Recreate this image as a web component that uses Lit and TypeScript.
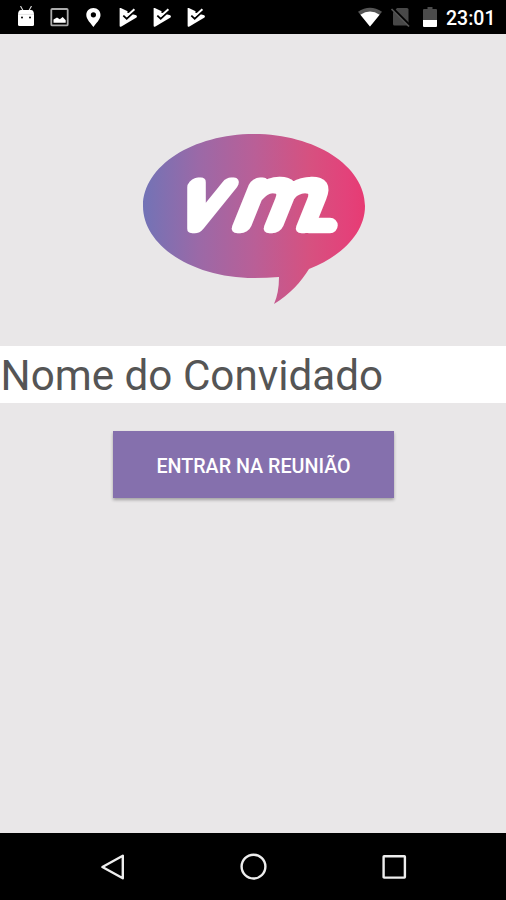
import { LitElement, html, css } from "lit";
import { customElement } from "lit/decorators.js";

const playCheck = () => html`
  <svg class="icon" width="20" height="22" viewBox="0 0 20 22">
    <path d="M1.6 2.6Q1.6 1.6 2.8 2L18.5 9.6Q19.4 10.5 18.5 11.4L3.4 20.6Q1.6 21.4 1.6 19.6Z" fill="#fff" />
    <path d="M9 6.6 12 1.5 20 1.5 20 8.5 15.5 8.6Z" fill="#000" />
    <path d="M5.4 9.6 8.7 12.6 16.6 5.2" fill="none" stroke="#000" stroke-width="2" />
    <path d="M6 7.6 8.7 10.2 16.4 3.2" fill="none" stroke="#fff" stroke-width="2" />
  </svg>`;

@customElement("status-bar")
class StatusBar extends LitElement {
  static styles = css`
    :host {
      display: flex;
      justify-content: space-between;
      align-items: center;
      height: 34px;
      box-sizing: border-box;
      padding: 0 10px 0 16px;
      background: #000;
      color: #fff;
      font-family: Roboto, sans-serif;
    }
    .group { display: flex; align-items: center; }
    .left { gap: 14px; }
    .right { gap: 8px; }
    .icon { display: block; flex: none; }
    .battery { margin-left: 2px; }
    .time {
      width: 50px;
      font-size: 19.5px;
      font-weight: 500;
      line-height: 34px;
      padding-top: 3px;
      white-space: nowrap;
    }
  `;
  render() {
    return html`
      <div class="group left">
        <svg class="icon" width="20" height="22" viewBox="0 0 20 22">
          <path d="M4.5 0 7 4.5M15.5 0 13 4.5" stroke="#ddd" stroke-width="1.1" />
          <path d="M2 9Q2 4 5 4H15Q18 4 18 9V18.5Q18 20 16.5 20H3.5Q2 20 2 18.5Z" fill="#fff" />
          <path d="M2 8.4H18" stroke="#ccc" stroke-width=".6" />
          <circle cx="6" cy="11.5" r="1" /><circle cx="14" cy="11.5" r="1" />
        </svg>
        <svg class="icon" width="20" height="22" viewBox="0 0 20 22">
          <rect x="1.3" y="3" width="16.4" height="16.4" rx="1" fill="none" stroke="#aaa" stroke-width="1.8" />
          <path d="M3.5 16.8V13.4L7 11.5 9.8 13.2 12.7 11 15.7 14.2V16.8Z" fill="#fff" />
        </svg>
        <svg class="icon" width="20" height="22" viewBox="0 0 20 22">
          <path fill="#fff" fill-rule="evenodd" d="M9.4 2C5.2 2 2.3 5 2.3 9C2.3 13.5 7 17.5 9.4 21C11.8 17.5 16.5 13.5 16.5 9C16.5 5 13.6 2 9.4 2ZM9.4 6.2A2.6 2.6 0 1 1 9.4 11.4A2.6 2.6 0 1 1 9.4 6.2Z" />
        </svg>
        ${playCheck()}${playCheck()}${playCheck()}
      </div>
      <div class="group right">
        <svg class="icon" width="24" height="20" viewBox="0 0 24 20">
          <path d="M0 4.8Q12-3.4 24 4.8L12 19.5Z" fill="#555" />
          <path d="M2.4 7.7Q12 1.4 21.6 7.7L12 19.5Z" fill="#fff" />
        </svg>
        <svg class="icon" width="22" height="22" viewBox="0 0 22 22">
          <path d="M7 2H17Q18.5 2 18.5 3.5V18Q18.5 19.5 17 19.5H4.5Q3 19.5 3 18V6.5Z" fill="#484848" />
          <path d="M2.5 2.2 20 19.7" stroke="#000" stroke-width="2.4" />
          <path d="M1.5 3 19 20.5" stroke="#555" stroke-width="1.7" />
        </svg>
        <svg class="icon battery" width="16" height="22" viewBox="0 0 16 22">
          <path d="M2 3H5.5V1H10.5V3H14Q15 3 15 4V14H1V4Q1 3 2 3Z" fill="#4c4c4c" />
          <path d="M1 14H15V20Q15 21 14 21H2Q1 21 1 20Z" fill="#fff" />
        </svg>
        <span class="time">23:01</span>
      </div>`;
  }
}

@customElement("brand-logo")
class BrandLogo extends LitElement {
  static styles = css`
    :host { display: block; width: 222px; height: 170px; }
    svg { display: block; }
    .mark {
      font-family: Roboto, sans-serif;
      font-weight: 100;
      font-size: 78px;
      fill: #fff;
      stroke: #fff;
      stroke-width: 14.5px;
      stroke-linejoin: round;
      stroke-linecap: round;
    }
  `;
  render() {
    return html`
      <svg width="222" height="170" viewBox="0 0 222 170">
        <defs>
          <linearGradient id="g" gradientUnits="userSpaceOnUse" x1="0" y1="0" x2="222" y2="0">
            <stop offset="0" stop-color="#7273b6" />
            <stop offset=".25" stop-color="#9b69a7" />
            <stop offset=".5" stop-color="#b95f97" />
            <stop offset=".75" stop-color="#d65180" />
            <stop offset=".92" stop-color="#e3427a" />
            <stop offset="1" stop-color="#e73b73" />
          </linearGradient>
        </defs>
        <path fill="url(#g)" d="M111 0C172 0 222 32 222 72C222 99 199 122 166 135C158 148 147 160 131 170Q136 159 136 143Q124 144 111 144C50 144 0 112 0 72C0 32 50 0 111 0Z" />
        <text class="mark" transform="translate(34 92) skewX(-22) scale(1.04 1)">v</text>
        <text class="mark" transform="translate(90.5 92) skewX(-22) scale(1.15 1)">m</text>
        <path d="M166 91.5H187" stroke="#fff" stroke-width="15.5" stroke-linecap="round" />
      </svg>`;
  }
}

@customElement("nav-bar")
class NavBar extends LitElement {
  static styles = css`
    :host {
      display: flex;
      justify-content: center;
      align-items: center;
      gap: 112px;
      height: 67px;
      background: #000;
    }
    svg { display: block; flex: none; fill: none; stroke: #eee; stroke-width: 2.4; stroke-linejoin: round; }
  `;
  render() {
    return html`
      <svg width="28" height="28" viewBox="0 0 28 28"><path d="M3.4 14 23.8 2.7V25.3Z" /></svg>
      <svg width="28" height="28" viewBox="0 0 28 28"><circle cx="14.5" cy="13.6" r="11.9" /></svg>
      <svg width="28" height="28" viewBox="0 0 28 28"><rect x="4.6" y="3.3" width="21.3" height="21.3" rx=".5" /></svg>`;
  }
}

@customElement("app-root")
class AppRoot extends LitElement {
  static styles = css`
    :host {
      display: flex;
      flex-direction: column;
      height: 900px;
      background: #e9e7e8;
      font-family: Roboto, sans-serif;
    }
    main {
      flex: 1;
      display: flex;
      flex-direction: column;
      align-items: center;
      padding: 100px 0 0 1px;
    }
    .guest {
      align-self: stretch;
      box-sizing: border-box;
      height: 57px;
      margin: 42px 0 0 -1px;
      padding: 1px 0 0 0.6px;
      background: #fff;
      color: #555;
      font-size: 42.2px;
      line-height: 57px;
      white-space: nowrap;
    }
    .enter {
      width: 281px;
      height: 67px;
      margin-top: 28px;
      padding: 3px 0 0;
      border: 0;
      background: #8570ad;
      box-shadow: 0 2px 3px rgba(0, 0, 0, 0.3);
      color: #fff;
      font: 500 19.7px Roboto, sans-serif;
      white-space: nowrap;
    }
  `;
  render() {
    return html`
      <status-bar></status-bar>
      <main>
        <brand-logo></brand-logo>
        <div class="guest">Nome do Convidado</div>
        <button class="enter">ENTRAR NA REUNIÃO</button>
      </main>
      <nav-bar></nav-bar>`;
  }
}
